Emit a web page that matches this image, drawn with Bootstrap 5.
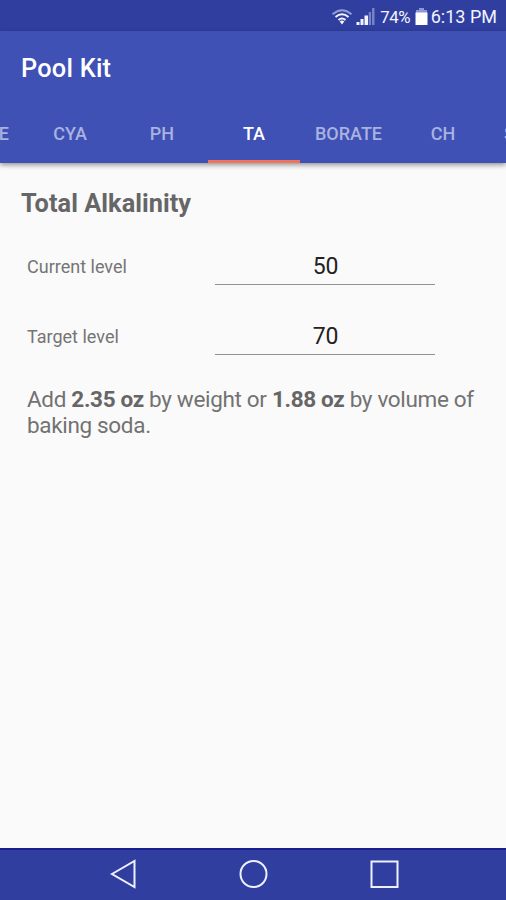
<!DOCTYPE html>
<html lang="en">
<head>
<meta charset="utf-8">
<meta name="viewport" content="width=device-width, initial-scale=1">
<title>Pool Kit</title>
<link href="https://cdn.jsdelivr.net/npm/bootstrap@5.3.0/dist/css/bootstrap.min.css" rel="stylesheet">
<style>
body{font-family:Roboto,"Liberation Sans",sans-serif;background:#fafafa;color:#6a6a6a;height:900px}
.status{height:31px;background:#303f9f;color:#f2f4ff;font-size:18px;line-height:32px;padding:2px 9px 0 0}
.status svg{flex:none}
.pct{font-size:16.8px;margin:0 5px 0 5px;letter-spacing:-.4px}
.clock{margin-left:2.5px}
.app-head{height:132px;background:#3f51b5;box-shadow:0 2px 5px rgba(0,0,0,.42);z-index:1}
.app-title{font-size:25.3px;line-height:30px;letter-spacing:.25px;font-weight:500;color:#fff;padding:23px 0 0 21px}
.tabs{height:60px}
.tabs .nav-link{flex:none;width:92px;padding:2px 0 0;text-align:center;color:#a9b2e0;font-size:18px;line-height:58px;font-weight:500;border-radius:0;white-space:nowrap}
.tabs .nav-link.active{color:#fff;box-shadow:inset 0 -3px #ee7460}
.tabs .tab-first{width:24px;direction:rtl;padding-right:15px}
.tabs .tab-wide{width:97px}
.tabs .tab-last{width:100px;text-align:left;padding-left:15px}
.heading{font-size:25.3px;line-height:30px;letter-spacing:.06px;font-weight:700;margin:26px 0 0 21px;color:#666}
.fields{padding:28px 71px 0 27px}
.field-row{height:70px}
.field-row label{width:188px;font-size:18px;line-height:40px;color:#757575}
.field-row .form-control{width:220px;height:38px;font-family:inherit;font-size:23px;letter-spacing:-.3px;line-height:30px;color:#222;text-align:center;background:transparent;border:0;border-bottom:1.5px solid #929292;border-radius:0;padding:2px 0 0 1px}
.result{font-size:22.5px;letter-spacing:-.33px;line-height:26px;margin:-1px 20px 0 27px;color:#727272}
.result b{color:#666}
.softkeys{height:52px;background:#303f9f;border-top:2px solid #1b1e8e}
</style>
</head>
<body class="d-flex flex-column overflow-hidden">
<div class="status d-flex justify-content-end align-items-center">
<svg width="22" height="18" viewBox="0 0 22 18" fill="none" stroke-width="2"><path d="M1.500 6.200Q11-1.800 20.500 6.200" stroke="#929cd5"/><path d="M4.500 9Q11 3.500 17.500 9M7.500 12Q11 9 14.500 12" stroke="#f2f4ff"/><path d="M8.700 13.500Q11 11.600 13.300 13.500L11 16.500Z" fill="#f2f4ff"/></svg>
<svg width="22" height="20" viewBox="0 0 22 20"><path d="M3.500 15h3v3h-3zM7.500 12h3v6h-3zM11.500 8.500H15V18h-3.500z" fill="#f2f4ff"/><path d="M15.700 5h2.300v13h-2.300zM19 1h2.500v17H19z" fill="#7883c6"/></svg>
<span class="pct">74%</span>
<svg width="13" height="18" viewBox="0 0 13 18"><path d="M4 0h5v2h3v3H1V2h3z" fill="#8e98d2"/><path d="M.5 4.500h12V17H.5z" fill="#fff"/></svg>
<span class="clock">6:13 PM</span>
</div>
<header class="app-head position-relative d-flex flex-column justify-content-between">
<h1 class="app-title m-0">Pool Kit</h1>
<nav class="tabs nav flex-nowrap overflow-hidden">
<a class="nav-link tab-first" href="#">E</a>
<a class="nav-link" href="#">CYA</a>
<a class="nav-link" href="#">PH</a>
<a class="nav-link active" href="#">TA</a>
<a class="nav-link tab-wide" href="#">BORATE</a>
<a class="nav-link" href="#">CH</a>
<a class="nav-link tab-last" href="#">S</a>
</nav>
</header>
<main class="flex-grow-1">
<h2 class="heading">Total Alkalinity</h2>
<div class="fields">
<div class="field-row d-flex"><label for="current">Current level</label><input class="form-control" id="current" value="50"></div>
<div class="field-row d-flex"><label for="target">Target level</label><input class="form-control" id="target" value="70"></div>
</div>
<p class="result">Add <b>2.35 oz</b> by weight or <b>1.88 oz</b> by volume of baking soda.</p>
</main>
<footer class="softkeys d-flex justify-content-center">
<svg width="330" height="50" viewBox="88 850 330 50" fill="none" stroke="#eef0ff" stroke-width="2"><path d="M112 874L134.500 861V887Z"/><circle cx="253.500" cy="874" r="13"/><path d="M371.500 861.500h26v25.500h-26z"/></svg>
</footer>
</body>
</html>
